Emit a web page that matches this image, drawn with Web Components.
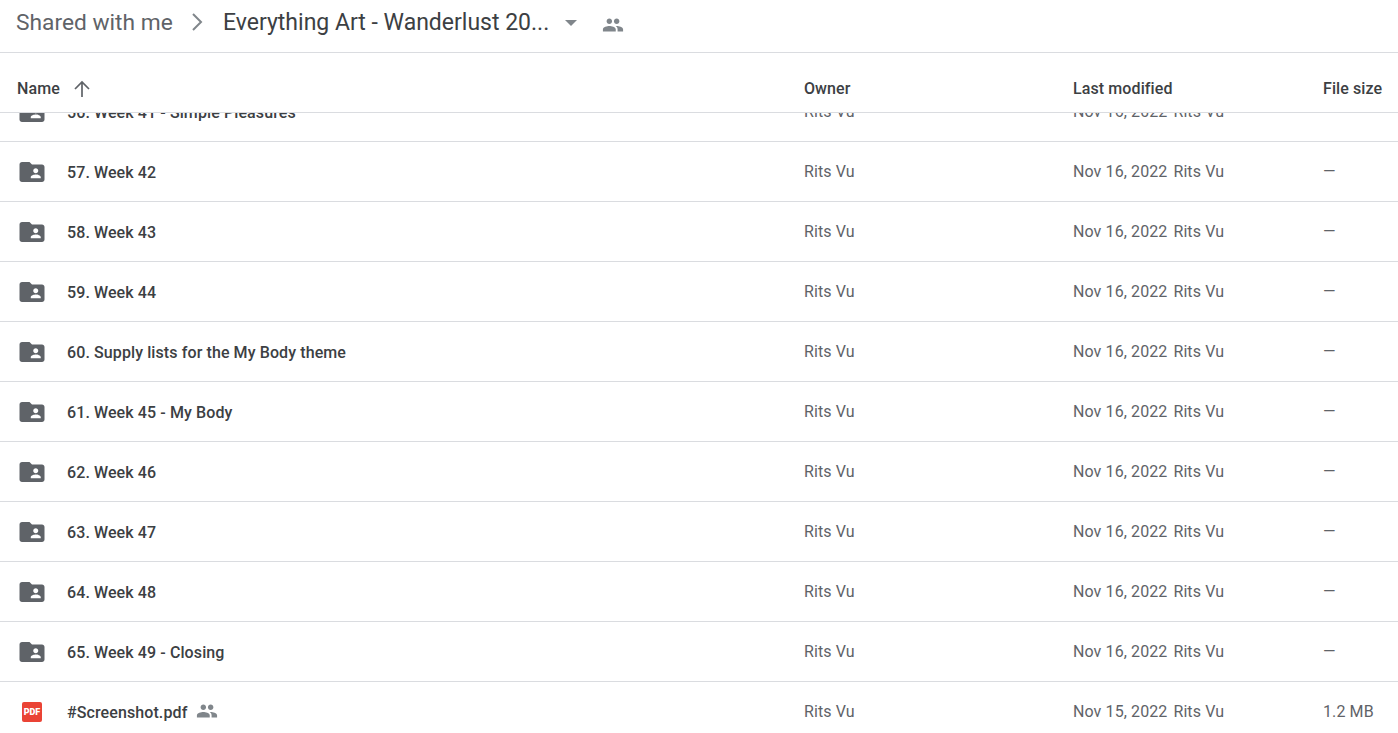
<!DOCTYPE html>
<html>
<head>
<meta charset="utf-8">
<title>Shared with me</title>
<style>
  html, body { margin: 0; height: 733px; overflow: hidden; background: #fff; }
  body { font-family: Roboto, "Liberation Sans", sans-serif; color: #3c4043; }
</style>
</head>
<body>
<drive-page>
  <drive-header></drive-header>
  <drive-columns></drive-columns>
  <drive-list>
    <drive-row name="56. Week 41 - Simple Pleasures" date="Nov 16, 2022"></drive-row>
    <drive-row name="57. Week 42" date="Nov 16, 2022"></drive-row>
    <drive-row name="58. Week 43" date="Nov 16, 2022"></drive-row>
    <drive-row name="59. Week 44" date="Nov 16, 2022"></drive-row>
    <drive-row name="60. Supply lists for the My Body theme" date="Nov 16, 2022"></drive-row>
    <drive-row name="61. Week 45 - My Body" date="Nov 16, 2022"></drive-row>
    <drive-row name="62. Week 46" date="Nov 16, 2022"></drive-row>
    <drive-row name="63. Week 47" date="Nov 16, 2022"></drive-row>
    <drive-row name="64. Week 48" date="Nov 16, 2022"></drive-row>
    <drive-row name="65. Week 49 - Closing" date="Nov 16, 2022"></drive-row>
    <drive-row type="pdf" shared name="#Screenshot.pdf" date="Nov 15, 2022" size="1.2 MB"></drive-row>
  </drive-list>
</drive-page>
<script>
const PEOPLE = 'M16 11c1.66 0 2.99-1.34 2.99-3S17.66 5 16 5c-1.66 0-3 1.34-3 3s1.34 3 3 3zm-8 0c1.66 0 2.99-1.34 2.99-3S9.66 5 8 5C6.34 5 5 6.34 5 8s1.34 3 3 3zm0 2c-2.33 0-7 1.17-7 3.5V19h14v-2.5c0-2.33-4.67-3.5-7-3.5zm8 0c-.29 0-.62.02-.97.05 1.16.84 1.97 1.97 1.97 3.45V19h6v-2.5c0-2.33-4.67-3.5-7-3.5z';
const FOLDER = 'M20 6h-8l-2-2H4c-1.1 0-1.99.9-1.99 2L2 18c0 1.1.9 2 2 2h16c1.1 0 2-.9 2-2V8c0-1.1-.9-2-2-2zm-5 3c1.1 0 2 .9 2 2s-.9 2-2 2-2-.9-2-2 .9-2 2-2zm4 8h-8v-1c0-1.33 2.67-2 4-2s4 .67 4 2v1z';

class DrivePage extends HTMLElement {
  connectedCallback() {
    this.attachShadow({ mode: 'open' });
    this.shadowRoot.innerHTML = `
      <style>
        :host { display: flex; flex-direction: column; height: 733px; overflow: hidden; }
      </style>
      <slot></slot>
    `;
  }
}

class DriveHeader extends HTMLElement {
  connectedCallback() {
    this.attachShadow({ mode: 'open' });
    this.shadowRoot.innerHTML = `
      <style>
        :host {
          display: flex;
          align-items: center;
          flex: none;
          border-bottom: 1px solid #dadce0;
          padding-left: 16px;
          padding-bottom: 8px;
          height: 44px;
          font-family: Roboto, "Liberation Sans", sans-serif;
          font-size: 23px;
        }
        .root { color: #5f6368; width: 157px; white-space: nowrap; font-size: 22.750px; }
        .sep { width: 50px; display: flex; justify-content: center; }
        .title { color: #3c4043; width: 326px; white-space: nowrap; }
        .caret {
          width: 0; height: 0; margin-left: 16px; margin-top: 2px;
          border-left: 6.500px solid transparent;
          border-right: 6.500px solid transparent;
          border-top: 6.500px solid #80868b;
        }
        svg { display: block; }
        .people { margin-left: 25px; margin-top: 5px; }
      </style>
      <span class="root">Shared with me</span>
      <span class="sep">
        <svg width="26" height="26" viewBox="0 0 26 26" fill="none" stroke="#80868b" stroke-width="2"><path d="M8 5l8 8-8 8"/></svg>
      </span>
      <span class="title">Everything Art - Wanderlust 20...</span>
      <span class="caret"></span>
      <svg class="people" width="22" height="22" viewBox="0 0 24 24" fill="#80868b"><path d="${PEOPLE}"/></svg>
    `;
  }
}

class DriveColumns extends HTMLElement {
  connectedCallback() {
    this.attachShadow({ mode: 'open' });
    this.shadowRoot.innerHTML = `
      <style>
        :host {
          display: grid;
          grid-template-columns: 804px 269px 250px 1fr;
          align-items: center;
          flex: none;
          height: 47px;
          padding-top: 12px;
          border-bottom: 1px solid #dadce0;
          font-size: 16px;
          letter-spacing: .1px;
          font-weight: 500;
          color: #3c4043;
          position: relative;
          z-index: 1;
          background: #fff;
          white-space: nowrap;
        }
        .name { display: flex; align-items: center; gap: 12px; padding-left: 17px; }
        svg { display: block; }
      </style>
      <div class="name">
        <span>Name</span>
        <svg style="margin-left:-1px" width="22" height="22" viewBox="0 0 22 22" fill="none" stroke="#5f6368" stroke-width="1.700"><path d="M11 19V4M4 11l7-7 7 7"/></svg>
      </div>
      <div>Owner</div>
      <div>Last modified</div>
      <div>File size</div>
    `;
  }
}

class DriveList extends HTMLElement {
  connectedCallback() {
    this.attachShadow({ mode: 'open' });
    this.shadowRoot.innerHTML = `
      <style>
        :host { display: block; flex: 1; min-height: 0; overflow: hidden; }
        .scroll { margin-top: -31px; }
      </style>
      <div class="scroll"><slot></slot></div>
    `;
  }
}

class DriveRow extends HTMLElement {
  connectedCallback() {
    const icon = this.getAttribute('type') === 'pdf'
      ? `<span class="pdf">PDF</span>`
      : `<svg class="folder" width="30" height="30" viewBox="0 0 24 24" fill="#5f6368"><path d="${FOLDER}"/></svg>`;
    const shared = this.hasAttribute('shared')
      ? `<svg class="shared" width="22" height="22" viewBox="0 0 24 24" fill="#80868b"><path d="${PEOPLE}"/></svg>`
      : '';
    this.attachShadow({ mode: 'open' });
    this.shadowRoot.innerHTML = `
      <style>
        :host {
          display: grid;
          grid-template-columns: 804px 269px 250px 1fr;
          align-items: center;
          height: 59px;
          border-bottom: 1px solid #dadce0;
          font-size: 16px;
          letter-spacing: .1px;
          color: #5f6368;
          white-space: nowrap;
        }
        .name { display: flex; align-items: center; }
        .icon { width: 67px; display: flex; padding-left: 17px; box-sizing: border-box; flex: none; }
        .folder { display: block; }
        .pdf {
          margin-left: 5px;
          width: 20px; height: 20px;
          border-radius: 2px;
          background: #ea4335;
          color: #fff;
          font-size: 9px;
          font-weight: 900;
          line-height: 20px;
          text-align: center;
          letter-spacing: 0;
        }
        .text { color: #3c4043; font-weight: 500; padding-top: 2px; }
        .shared { display: block; margin-left: 9px; margin-top: -2px; }
        .date { display: flex; gap: 6px; }
        .size { color: #5f6368; }
      </style>
      <div class="name">
        <span class="icon">${icon}</span>
        <span class="text">${this.getAttribute('name')}</span>
        ${shared}
      </div>
      <div>Rits Vu</div>
      <div class="date"><span>${this.getAttribute('date')}</span><span>Rits Vu</span></div>
      <div class="size">${this.getAttribute('size') || '—'}</div>
    `;
  }
}

customElements.define('drive-page', DrivePage);
customElements.define('drive-header', DriveHeader);
customElements.define('drive-columns', DriveColumns);
customElements.define('drive-list', DriveList);
customElements.define('drive-row', DriveRow);
</script>
</body>
</html>
